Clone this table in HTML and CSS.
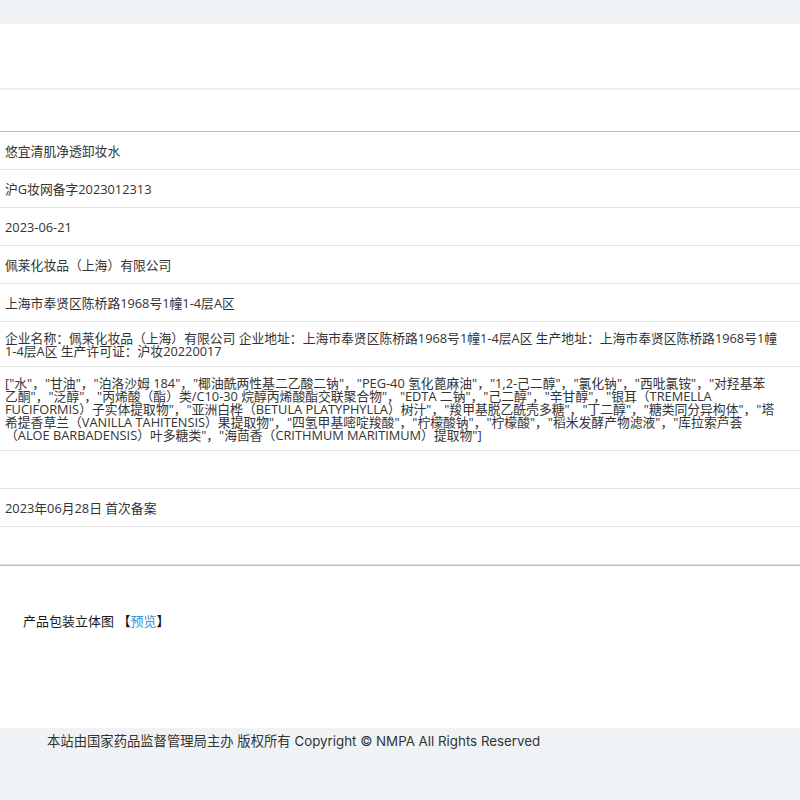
FILE: index.html
```html
<!DOCTYPE html>
<html lang="zh-CN">
<head>
<meta charset="utf-8">
<title>化妆品备案信息</title>
<link rel="stylesheet" href="styles.css">
</head>
<body>
<div class="topbar"></div>
<div class="header"></div>
<div class="subheader"></div>
<div class="table">
  <div class="row">悠宜清肌净透卸妆水</div>
  <div class="row">沪G妆网备字2023012313</div>
  <div class="row">2023-06-21</div>
  <div class="row">佩莱化妆品（上海）有限公司</div>
  <div class="row">上海市奉贤区陈桥路1968号1幢1-4层A区</div>
  <div class="row multi">企业名称：佩莱化妆品（上海）有限公司 企业地址：上海市奉贤区陈桥路1968号1幢1-4层A区 生产地址：上海市奉贤区陈桥路1968号1幢1-4层A区 生产许可证：沪妆20220017</div>
  <div class="row multi ingredients">["水"，"甘油"，"泊洛沙姆 184"，"椰油酰两性基二乙酸二钠"，"PEG-40 氢化蓖麻油"，"1,2-己二醇"，"氯化钠"，"西吡氯铵"，"对羟基苯乙酮"，"泛醇"，"丙烯酸（酯）类/C10-30 烷醇丙烯酸酯交联聚合物"，"EDTA 二钠"，"己二醇"，"辛甘醇"，"银耳（TREMELLA FUCIFORMIS）子实体提取物"，"亚洲白桦（BETULA PLATYPHYLLA）树汁"，"羧甲基脱乙酰壳多糖"，"丁二醇"，"糖类同分异构体"，"塔希提香草兰（VANILLA TAHITENSIS）果提取物"，"四氢甲基嘧啶羧酸"，"柠檬酸钠"，"柠檬酸"，"稻米发酵产物滤液"，"库拉索芦荟（ALOE BARBADENSIS）叶多糖类"，"海茴香（CRITHMUM MARITIMUM）提取物"]</div>
  <div class="row"></div>
  <div class="row">2023年06月28日 首次备案</div>
  <div class="row"></div>
</div>
<div class="package">
  <span class="label">产品包装立体图</span> <span class="bracket">【</span><a class="preview" href="#">预览</a><span class="bracket">】</span>
</div>
<div class="footer">
  <p class="copyright">本站由国家药品监督管理局主办 版权所有 Copyright © NMPA All Rights Reserved</p>
</div>
</body>
</html>
```

FILE: styles.css
```css
html, body {
  margin: 0;
  padding: 0;
  background: #ffffff;
}
body {
  font-family: "Open Sans", "Noto Sans CJK SC", sans-serif;
  font-size: 13px;
  color: #333333;
}
.topbar {
  height: 24px;
  background: #eff3f6;
}
.header {
  height: 64px;
  border-bottom: 2px solid #ececec;
}
.subheader {
  height: 41px;
}
.table {
  border-top: 1px solid #a7bde0;
  border-bottom: 1px solid #a7bde0;
  font-size: 12.8px;
}
.row {
  display: flex;
  align-items: center;
  min-height: 38px;
  box-sizing: border-box;
  padding: 10px 21.5px 8px 5px;
  line-height: 13px;
  border-bottom: 1px solid #e3e3e3;
}
.row.multi {
  display: block;
}
.row.ingredients {
  padding-right: 24px;
}
.package {
  box-sizing: border-box;
  height: 162px;
  padding: 47px 23px 0;
  line-height: 16px;
  color: #1a1a1a;
}
.bracket {
  color: #111;
}
.preview {
  color: #3d8ddb;
  text-decoration: none;
}
.footer {
  background: #eff3f6;
  height: 73px;
  padding: 5px 47px 0;
  box-sizing: border-box;
}
.copyright {
  margin: 0;
  font-family: "Inter", "Noto Sans CJK SC", sans-serif;
  font-size: 13.33px;
  line-height: 16px;
  color: #333;
}
```
